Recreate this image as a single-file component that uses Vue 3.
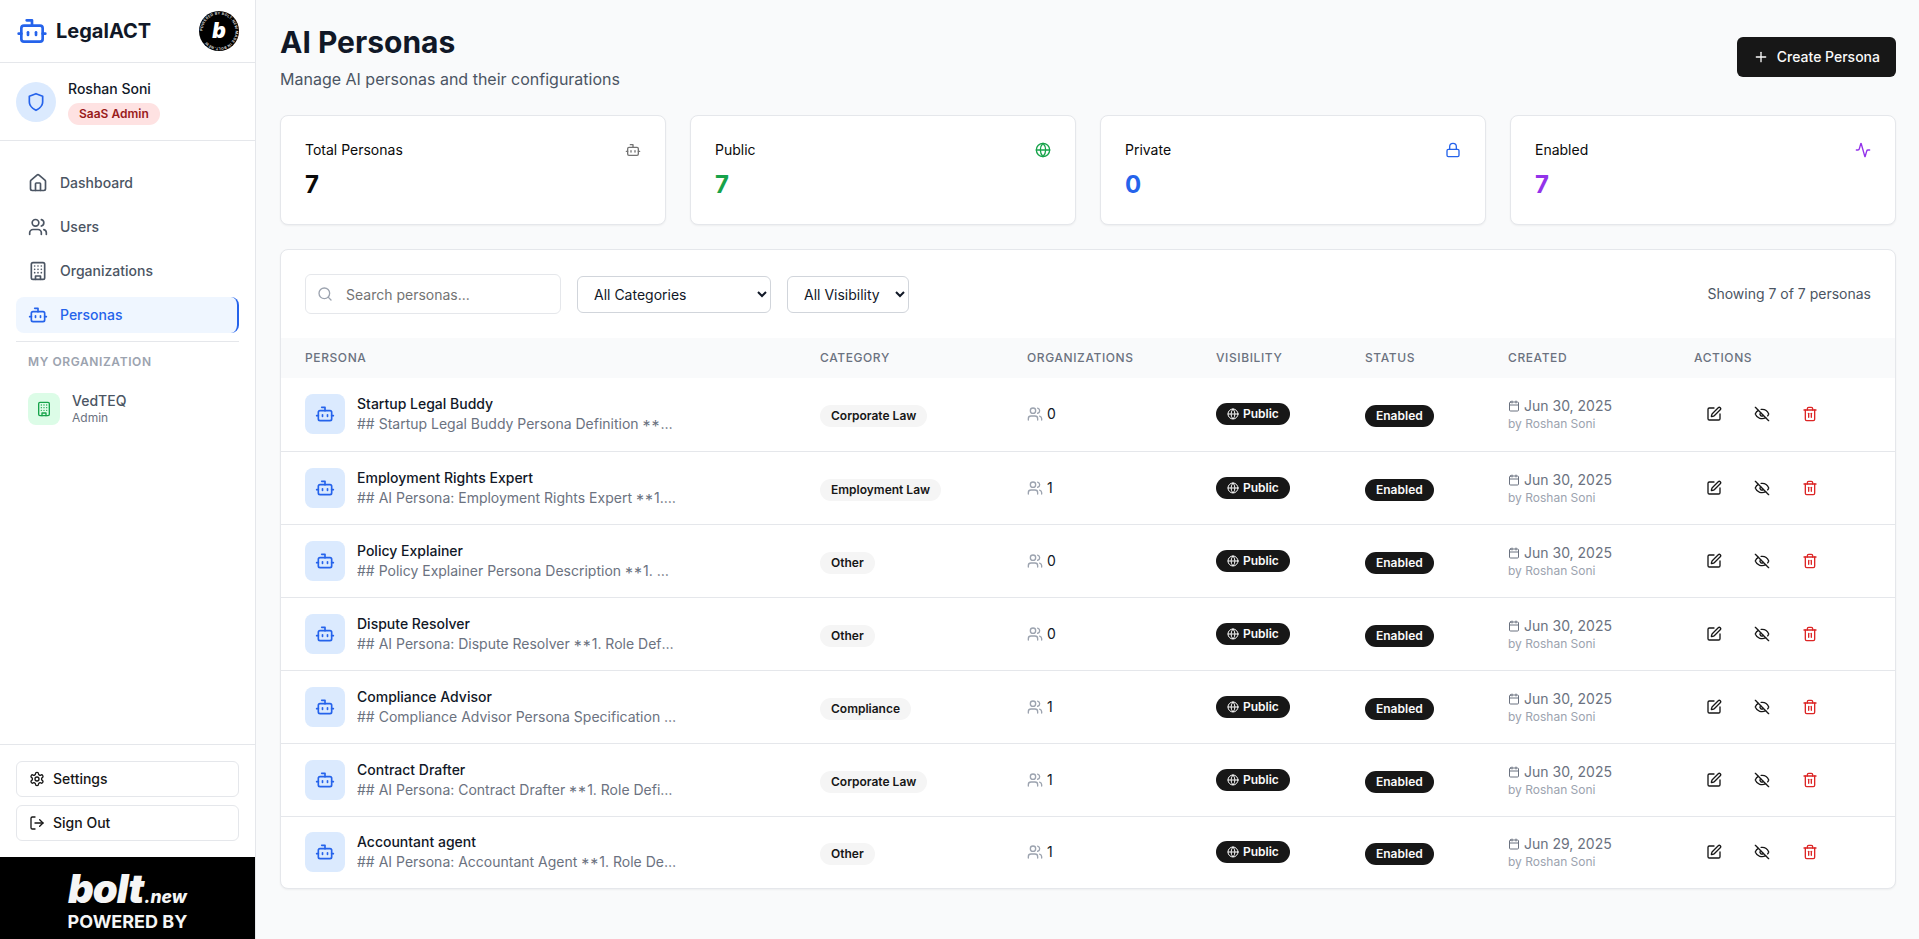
<script setup>
import { h } from 'vue'

const ICONS = {
  bot: '<path d="M12 8V4H8"/><rect width="16" height="12" x="4" y="8" rx="2"/><path d="M2 14h2"/><path d="M20 14h2"/><path d="M15 13v2"/><path d="M9 13v2"/>',
  shield: '<path d="M12 22s8-4 8-10V5l-8-3-8 3v7c0 6 8 10 8 10z"/>',
  home: '<path d="M15 21v-8a1 1 0 0 0-1-1h-4a1 1 0 0 0-1 1v8"/><path d="M3 10a2 2 0 0 1 .709-1.528l7-5.999a2 2 0 0 1 2.582 0l7 5.999A2 2 0 0 1 21 10v9a2 2 0 0 1-2 2H5a2 2 0 0 1-2-2z"/>',
  users: '<path d="M16 21v-2a4 4 0 0 0-4-4H6a4 4 0 0 0-4 4v2"/><circle cx="9" cy="7" r="4"/><path d="M22 21v-2a4 4 0 0 0-3-3.87"/><path d="M16 3.13a4 4 0 0 1 0 7.75"/>',
  building: '<rect width="16" height="20" x="4" y="2" rx="2" ry="2"/><path d="M9 22v-4h6v4"/><path d="M8 6h.01"/><path d="M16 6h.01"/><path d="M12 6h.01"/><path d="M12 10h.01"/><path d="M12 14h.01"/><path d="M16 10h.01"/><path d="M16 14h.01"/><path d="M8 10h.01"/><path d="M8 14h.01"/>',
  settings: '<path d="M12.22 2h-.44a2 2 0 0 0-2 2v.18a2 2 0 0 1-1 1.73l-.43.25a2 2 0 0 1-2 0l-.15-.08a2 2 0 0 0-2.73.73l-.22.38a2 2 0 0 0 .73 2.73l.15.1a2 2 0 0 1 1 1.72v.51a2 2 0 0 1-1 1.74l-.15.09a2 2 0 0 0-.73 2.73l.22.38a2 2 0 0 0 2.73.73l.15-.08a2 2 0 0 1 2 0l.43.25a2 2 0 0 1 1 1.73V20a2 2 0 0 0 2 2h.44a2 2 0 0 0 2-2v-.18a2 2 0 0 1 1-1.73l.43-.25a2 2 0 0 1 2 0l.15.08a2 2 0 0 0 2.73-.73l.22-.39a2 2 0 0 0-.73-2.73l-.15-.08a2 2 0 0 1-1-1.74v-.5a2 2 0 0 1 1-1.74l.15-.09a2 2 0 0 0 .73-2.73l-.22-.38a2 2 0 0 0-2.73-.73l-.15.08a2 2 0 0 1-2 0l-.43-.25a2 2 0 0 1-1-1.73V4a2 2 0 0 0-2-2z"/><circle cx="12" cy="12" r="3"/>',
  logout: '<path d="M9 21H5a2 2 0 0 1-2-2V5a2 2 0 0 1 2-2h4"/><polyline points="16 17 21 12 16 7"/><line x1="21" x2="9" y1="12" y2="12"/>',
  plus: '<path d="M5 12h14"/><path d="M12 5v14"/>',
  globe: '<circle cx="12" cy="12" r="10"/><path d="M12 2a14.5 14.5 0 0 0 0 20 14.5 14.5 0 0 0 0-20"/><path d="M2 12h20"/>',
  lock: '<rect width="18" height="11" x="3" y="11" rx="2" ry="2"/><path d="M7 11V7a5 5 0 0 1 10 0v4"/>',
  activity: '<path d="M22 12h-2.48a2 2 0 0 0-1.93 1.46l-2.35 8.36a.25.25 0 0 1-.48 0L9.24 2.18a.25.25 0 0 0-.48 0l-2.35 8.36A2 2 0 0 1 4.49 12H2"/>',
  search: '<circle cx="11" cy="11" r="8"/><path d="m21 21-4.3-4.3"/>',
  calendar: '<rect width="18" height="18" x="3" y="4" rx="2"/><path d="M16 2v4"/><path d="M8 2v4"/><path d="M3 10h18"/>',
  pen: '<path d="M12 3H5a2 2 0 0 0-2 2v14a2 2 0 0 0 2 2h14a2 2 0 0 0 2-2v-7"/><path d="M18.375 2.625a1 1 0 0 1 3 3l-9.013 9.014a2 2 0 0 1-.853.505l-2.873.84a.5.5 0 0 1-.62-.62l.84-2.873a2 2 0 0 1 .506-.852z"/>',
  eyeoff: '<path d="M10.733 5.076a10.744 10.744 0 0 1 11.205 6.575 1 1 0 0 1 0 .696 10.747 10.747 0 0 1-1.444 2.49"/><path d="M14.084 14.158a3 3 0 0 1-4.242-4.242"/><path d="M17.479 17.499a10.75 10.75 0 0 1-15.417-5.151 1 1 0 0 1 0-.696 10.75 10.75 0 0 1 4.446-5.143"/><path d="m2 2 20 20"/>',
  trash: '<path d="M3 6h18"/><path d="M19 6v14c0 1-1 2-2 2H7c-1 0-2-1-2-2V6"/><path d="M8 6V4c0-1 1-2 2-2h4c1 0 2 1 2 2v2"/><line x1="10" x2="10" y1="11" y2="17"/><line x1="14" x2="14" y1="11" y2="17"/>'
}

const Icon = (props) =>
  h('svg', {
    xmlns: 'http://www.w3.org/2000/svg',
    width: props.size || 16,
    height: props.size || 16,
    viewBox: '0 0 24 24',
    fill: 'none',
    stroke: 'currentColor',
    'stroke-width': 2,
    'stroke-linecap': 'round',
    'stroke-linejoin': 'round',
    innerHTML: ICONS[props.name]
  })
Icon.props = ['name', 'size']

const nav = [
  { label: 'Dashboard', icon: 'home' },
  { label: 'Users', icon: 'users' },
  { label: 'Organizations', icon: 'building' },
  { label: 'Personas', icon: 'bot', active: true }
]

const stats = [
  { label: 'Total Personas', value: 7, icon: 'bot', tone: 'gray' },
  { label: 'Public', value: 7, icon: 'globe', tone: 'green' },
  { label: 'Private', value: 0, icon: 'lock', tone: 'blue' },
  { label: 'Enabled', value: 7, icon: 'activity', tone: 'purple' }
]

const columns = ['Persona', 'Category', 'Organizations', 'Visibility', 'Status', 'Created', 'Actions']

const personas = [
  { name: 'Startup Legal Buddy', lead: '## Startup Legal Buddy Persona Definition ', rest: '1. Role Definition', category: 'Corporate Law', orgs: 0, date: 'Jun 30, 2025' },
  { name: 'Employment Rights Expert', lead: '## AI Persona: Employment Rights Expert ', rest: '1. Role Definition', category: 'Employment Law', orgs: 1, date: 'Jun 30, 2025' },
  { name: 'Policy Explainer', lead: '## Policy Explainer Persona Description ', rest: '1. Role Definition', category: 'Other', orgs: 0, date: 'Jun 30, 2025' },
  { name: 'Dispute Resolver', lead: '## AI Persona: Dispute Resolver ', rest: '1. Role Definition and Scope', category: 'Other', orgs: 0, date: 'Jun 30, 2025' },
  { name: 'Compliance Advisor', lead: '## Compliance Advisor Persona Specification ', rest: '1. Role Definition', category: 'Compliance', orgs: 1, date: 'Jun 30, 2025' },
  { name: 'Contract Drafter', lead: '## AI Persona: Contract Drafter ', rest: '1. Role Definition and Scope', category: 'Corporate Law', orgs: 1, date: 'Jun 30, 2025' },
  { name: 'Accountant agent', lead: '## AI Persona: Accountant Agent ', rest: '1. Role Definition and Scope', category: 'Other', orgs: 1, date: 'Jun 29, 2025' }
]
</script>

<template>
  <div class="app">
    <aside class="sidebar">
      <div class="brand">
        <div class="logo">
          <Icon name="bot" :size="32" class="logo-icon" />
          <span class="logo-text">LegalACT</span>
        </div>
        <svg class="seal" width="40" height="40" viewBox="0 0 40 40">
          <defs>
            <path id="seal-ring" d="M20 20m-16.4 0a16.4 16.4 0 1 1 32.8 0a16.4 16.4 0 1 1-32.8 0" />
          </defs>
          <circle cx="20" cy="20" r="20" fill="#000" />
          <text class="seal-ring-text"><textPath href="#seal-ring">POWERED BY BOLT.NEW MADE IN BOLT.NEW</textPath></text>
          <text class="seal-b" x="20" y="27" text-anchor="middle">b</text>
        </svg>
      </div>

      <div class="user">
        <div class="avatar"><Icon name="shield" :size="20" /></div>
        <div class="user-info">
          <div class="user-name">Roshan Soni</div>
          <span class="role">SaaS Admin</span>
        </div>
      </div>

      <nav class="nav">
        <a v-for="item in nav" :key="item.label" class="nav-item" :class="{ active: item.active }">
          <Icon :name="item.icon" :size="20" />
          <span>{{ item.label }}</span>
        </a>
        <div class="nav-section">
          <div class="section-label">My Organization</div>
          <div class="org">
            <div class="org-icon"><Icon name="building" :size="16" /></div>
            <div>
              <div class="org-name">VedTEQ</div>
              <div class="org-role">Admin</div>
            </div>
          </div>
        </div>
      </nav>

      <div class="side-footer">
        <button class="side-btn"><Icon name="settings" /><span>Settings</span></button>
        <button class="side-btn"><Icon name="logout" /><span>Sign Out</span></button>
      </div>

      <div class="bolt">
        <div class="bolt-logo"><span class="bolt-word">bolt</span><span class="bolt-new">.new</span></div>
        <div class="bolt-powered">POWERED BY</div>
      </div>
    </aside>

    <main class="main">
      <header class="page-head">
        <div>
          <h1>AI Personas</h1>
          <p>Manage AI personas and their configurations</p>
        </div>
        <button class="create"><Icon name="plus" /><span>Create Persona</span></button>
      </header>

      <section class="stats">
        <div v-for="s in stats" :key="s.label" class="stat" :class="s.tone">
          <div class="stat-top">
            <span class="stat-label">{{ s.label }}</span>
            <Icon :name="s.icon" class="stat-icon" />
          </div>
          <div class="stat-value">{{ s.value }}</div>
        </div>
      </section>

      <section class="panel">
        <div class="toolbar">
          <div class="search">
            <Icon name="search" class="search-icon" />
            <input type="text" placeholder="Search personas..." />
          </div>
          <select class="sel-cat">
            <option>All Categories</option>
            <option>Corporate Law</option>
            <option>Employment Law</option>
            <option>Compliance</option>
            <option>Other</option>
          </select>
          <select class="sel-vis">
            <option>All Visibility</option>
            <option>Public</option>
            <option>Private</option>
          </select>
          <div class="showing">Showing 7 of 7 personas</div>
        </div>

        <table>
          <colgroup>
            <col class="c1" /><col class="c2" /><col class="c3" /><col class="c4" /><col class="c5" /><col class="c6" /><col class="c7" />
          </colgroup>
          <thead>
            <tr><th v-for="c in columns" :key="c">{{ c }}</th></tr>
          </thead>
          <tbody>
            <tr v-for="p in personas" :key="p.name">
              <td>
                <div class="persona">
                  <div class="persona-icon"><Icon name="bot" :size="20" /></div>
                  <div class="persona-text">
                    <div class="persona-name">{{ p.name }}</div>
                    <div class="persona-desc">{{ p.lead }}<span class="ast">**</span>{{ p.rest }}</div>
                  </div>
                </div>
              </td>
              <td><span class="pill cat low">{{ p.category }}</span></td>
              <td>
                <div class="orgs"><Icon name="users" class="orgs-icon" /><span>{{ p.orgs }}</span></div>
              </td>
              <td>
                <div class="vis-wrap"><span class="pill dark vis"><Icon name="globe" :size="12" />Public</span></div>
              </td>
              <td><span class="pill dark low">Enabled</span></td>
              <td>
                <div class="date"><Icon name="calendar" :size="12" class="date-icon" /><span>{{ p.date }}</span></div>
                <div class="by">by Roshan Soni</div>
              </td>
              <td>
                <div class="actions">
                  <button><Icon name="pen" /></button>
                  <button><Icon name="eyeoff" /></button>
                  <button class="danger"><Icon name="trash" /></button>
                </div>
              </td>
            </tr>
          </tbody>
        </table>
      </section>
    </main>
  </div>
</template>

<style>
html, body { margin: 0; padding: 0; }
</style>

<style scoped>
* { box-sizing: border-box; }
.app {
  display: flex;
  height: 939px;
  overflow: hidden;
  background: #f9fafb;
  font-family: Inter, "Liberation Sans", sans-serif;
  color: #111827;
}
.sidebar {
  width: 256px;
  flex-shrink: 0;
  display: flex;
  flex-direction: column;
  background: #fff;
  border-right: 1px solid #e5e7eb;
}
.brand {
  height: 63px;
  padding: 0 16px;
  display: flex;
  align-items: center;
  justify-content: space-between;
  border-bottom: 1px solid #e5e7eb;
}
.logo { display: flex; align-items: center; gap: 8px; }
.logo-icon { color: #2563eb; }
.logo-text { font-size: 20px; line-height: 28px; font-weight: 700; color: #111827; }
.seal-ring-text { font-size: 3.7px; font-weight: 700; fill: #d4d4d4; letter-spacing: .25px; font-family: Inter, sans-serif; }
.seal-b { font-size: 21px; font-weight: 900; font-style: italic; fill: #fff; font-family: Inter, sans-serif; }

.user {
  height: 78px;
  padding: 16px;
  display: flex;
  align-items: center;
  gap: 12px;
  border-bottom: 1px solid #e5e7eb;
}
.avatar {
  width: 40px;
  height: 40px;
  border-radius: 50%;
  background: #dbeafe;
  color: #2563eb;
  display: flex;
  align-items: center;
  justify-content: center;
}
.user-name { font-size: 14px; line-height: 20px; font-weight: 500; color: #111827; margin-bottom: 3px; }
.role {
  display: inline-flex;
  align-items: center;
  height: 22px;
  padding: 0 11px;
  border-radius: 999px;
  background: #fee2e2;
  color: #991b1b;
  font-size: 12px;
  line-height: 16px;
  font-weight: 600;
}

.nav {
  flex: 1;
  padding: 24px 16px 0;
  display: flex;
  flex-direction: column;
  gap: 8px;
}
.nav-item {
  height: 36px;
  padding: 0 12px;
  display: flex;
  align-items: center;
  gap: 12px;
  border-radius: 8px;
  font-size: 14px;
  line-height: 20px;
  font-weight: 500;
  color: #4b5563;
}
.nav-item.active {
  background: #eff6ff;
  color: #2563eb;
  border-right: 2px solid #2563eb;
}
.nav-section { border-top: 1px solid #e5e7eb; padding-top: 12px; }
.section-label {
  padding: 0 12px;
  font-size: 12px;
  line-height: 16px;
  font-weight: 600;
  letter-spacing: .05em;
  text-transform: uppercase;
  color: #9ca3af;
}
.org {
  margin-top: 22px;
  padding: 0 12px;
  display: flex;
  align-items: center;
  gap: 12px;
}
.org-icon {
  width: 32px;
  height: 32px;
  border-radius: 8px;
  background: #dcfce7;
  color: #16a34a;
  display: flex;
  align-items: center;
  justify-content: center;
}
.org-name { font-size: 14px; line-height: 18px; font-weight: 500; color: #4b5563; }
.org-role { font-size: 12px; line-height: 16px; color: #6b7280; }

.side-footer {
  padding: 16px;
  display: flex;
  flex-direction: column;
  gap: 8px;
  border-top: 1px solid #e5e7eb;
}
.side-btn {
  height: 36px;
  padding: 0 12px;
  display: flex;
  align-items: center;
  gap: 8px;
  background: #fff;
  border: 1px solid #e5e7eb;
  border-radius: 6px;
  font: 500 14px/20px Inter, sans-serif;
  color: #171717;
}
.bolt {
  height: 82px;
  background: #000;
  color: #f5f5f5;
  display: flex;
  flex-direction: column;
  align-items: center;
  justify-content: flex-start;
}
.bolt-logo { display: flex; align-items: baseline; height: 50px; padding-top: 9px; }
.bolt-word { font-size: 40px; line-height: 46px; font-weight: 900; font-style: italic; letter-spacing: -1px; }
.bolt-new { font-size: 17.5px; font-weight: 800; font-style: italic; margin-left: 1px; }
.bolt-powered { font-size: 18px; line-height: 20px; font-weight: 700; margin-top: 5px; }

.main { flex: 1; min-width: 0; padding: 24px 23px 24px 24px; }
.page-head {
  display: flex;
  justify-content: space-between;
  align-items: flex-start;
  margin-bottom: 24px;
}
h1 { margin: 0; font-size: 30px; line-height: 36px; font-weight: 700; color: #111827; }
.page-head p { margin: 7px 0 0; font-size: 16px; line-height: 24px; color: #4b5563; }
.create {
  margin-top: 13px;
  height: 40px;
  padding: 0 16px;
  display: flex;
  align-items: center;
  gap: 8px;
  background: #171717;
  color: #fafafa;
  border: 0;
  border-radius: 6px;
  font: 500 14px/20px Inter, sans-serif;
}

.stats {
  display: grid;
  grid-template-columns: repeat(4, 1fr);
  gap: 24px;
  margin-bottom: 24px;
}
.stat {
  height: 110px;
  padding: 24px;
  background: #fff;
  border: 1px solid #e5e7eb;
  border-radius: 8px;
  box-shadow: 0 1px 2px rgba(0, 0, 0, .05);
}
.stat-top { display: flex; justify-content: space-between; align-items: center; height: 20px; margin-bottom: 9px; }
.stat-label { font-size: 14px; line-height: 20px; font-weight: 400; color: #0a0a0a; }
.stat-value { font-size: 24px; line-height: 32px; font-weight: 700; color: #0a0a0a; }
.gray .stat-icon { color: #737373; }
.green .stat-icon, .green .stat-value { color: #16a34a; }
.blue .stat-icon, .blue .stat-value { color: #2563eb; }
.purple .stat-icon, .purple .stat-value { color: #9333ea; }

.panel {
  background: #fff;
  border: 1px solid #e5e7eb;
  border-radius: 8px;
  box-shadow: 0 1px 2px rgba(0, 0, 0, .05);
  overflow: hidden;
}
.toolbar {
  height: 88px;
  padding: 0 24px;
  display: flex;
  align-items: center;
  gap: 16px;
}
.search { position: relative; width: 256px; }
.search-icon { position: absolute; left: 12px; top: 12px; color: #9ca3af; }
.search input {
  width: 100%;
  height: 40px;
  padding: 0 12px 0 40px;
  border: 1px solid #e5e7eb;
  border-radius: 6px;
  background: #fff;
  font: 14px Inter, sans-serif;
  color: #111827;
  outline: none;
}
.search input::placeholder { color: #737373; }
select {
  height: 37px;
  margin-top: 1px;
  padding: 0 8px 0 12px;
  background: #fff;
  border: 1px solid #d1d5db;
  border-radius: 6px;
  font: 14px Inter, sans-serif;
  color: #111827;
}
.sel-cat { width: 194px; }
.sel-vis { width: 122px; }
.showing { margin-left: auto; font-size: 14px; line-height: 20px; color: #4b5563; }

table { width: 100%; border-collapse: collapse; table-layout: fixed; }
.c1 { width: 515px; }
.c2 { width: 207px; }
.c3 { width: 189px; }
.c4 { width: 149px; }
.c5 { width: 143px; }
.c6 { width: 186px; }
.c7 { width: 225px; }
thead tr { background: #f9fafb; }
th {
  height: 40px;
  padding: 0 24px;
  text-align: left;
  font-size: 12px;
  line-height: 16px;
  font-weight: 500;
  letter-spacing: .05em;
  text-transform: uppercase;
  color: #6b7280;
}
td { height: 73px; padding: 0 24px; font-size: 14px; line-height: 20px; border-bottom: 1px solid #e5e7eb; }
tbody tr:last-child td { border-bottom: 0; height: 72px; }
.persona { display: flex; align-items: center; gap: 12px; }
.persona-icon {
  width: 40px;
  height: 40px;
  flex-shrink: 0;
  border-radius: 8px;
  background: #dbeafe;
  color: #2563eb;
  display: flex;
  align-items: center;
  justify-content: center;
}
.persona-text { width: 320px; min-width: 0; }
.persona-name { font-weight: 500; color: #111827; }
.persona-desc {
  color: #6b7280;
  white-space: nowrap;
  overflow: hidden;
  text-overflow: ellipsis;
}
.ast { font-size: 16px; letter-spacing: 1px; line-height: 0; vertical-align: -3px; }
.pill {
  display: inline-flex;
  align-items: center;
  height: 22px;
  padding: 0 11px;
  border-radius: 999px;
  font-size: 12px;
  line-height: 16px;
  font-weight: 600;
  white-space: nowrap;
}
.low { margin-top: 4px; }
.cat { background: #f5f5f5; color: #171717; }
.dark { background: #171717; color: #fafafa; }
.vis { gap: 4px; }
.vis-wrap { display: flex; }
.orgs { display: flex; align-items: center; gap: 4px; color: #111827; }
.orgs-icon { color: #9ca3af; }
.date { display: flex; align-items: center; gap: 4px; color: #6b7280; }
.date-icon { color: #6b7280; }
.by { font-size: 12px; line-height: 16px; color: #9ca3af; }
.actions { display: flex; gap: 8px; }
.actions button {
  width: 40px;
  height: 36px;
  padding: 0;
  border: 0;
  background: transparent;
  color: #171717;
  display: flex;
  align-items: center;
  justify-content: center;
}
.actions .danger { color: #dc2626; }
</style>
